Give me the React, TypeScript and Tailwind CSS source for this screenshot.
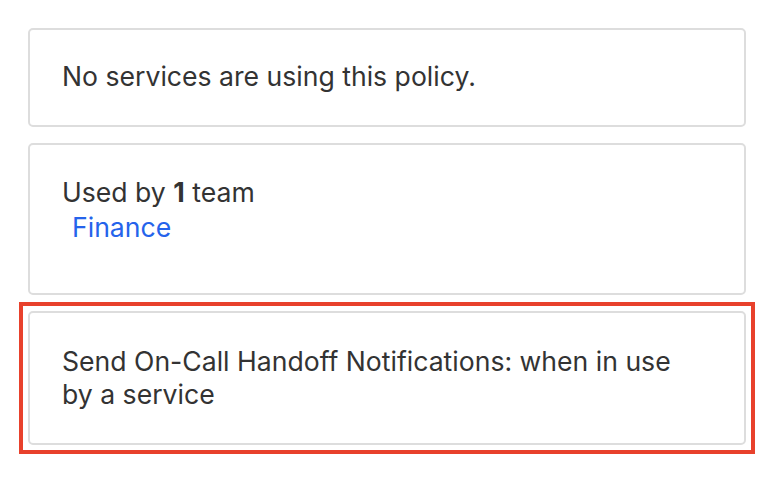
export default function App() {
  return (
    <div
      className="min-h-screen bg-white pl-[28px] pr-[32px] py-[28px] flex flex-col gap-[16px] text-[#333333] text-[26.6px] leading-[33px]"
      style={{ fontFamily: 'Inter, "Noto Sans", sans-serif' }}
    >
      <div className="border-2 border-[#dddddd] rounded-[5px] px-[32px] pt-[30px] pb-[32px]">
        No services are using this policy.
      </div>

      <div className="border-2 border-[#dddddd] rounded-[5px] px-[32px] pt-[31px] pb-[49px]">
        <div>
          Used by <span className="font-bold">1</span> team
        </div>
        <div className="pl-[10px] pt-[2px]">
          <a href="#" className="text-[#2563eb]">Finance</a>
        </div>
      </div>

      <div className="-mx-[9px] -my-[9px] border-4 border-[#e8412c] p-[5px]">
        <div className="border-2 border-[#dddddd] rounded-[5px] px-[32px] py-[32px]">
          Send On-Call Handoff Notifications: when in use
          <br />
          by a service
        </div>
      </div>
    </div>
  );
}
